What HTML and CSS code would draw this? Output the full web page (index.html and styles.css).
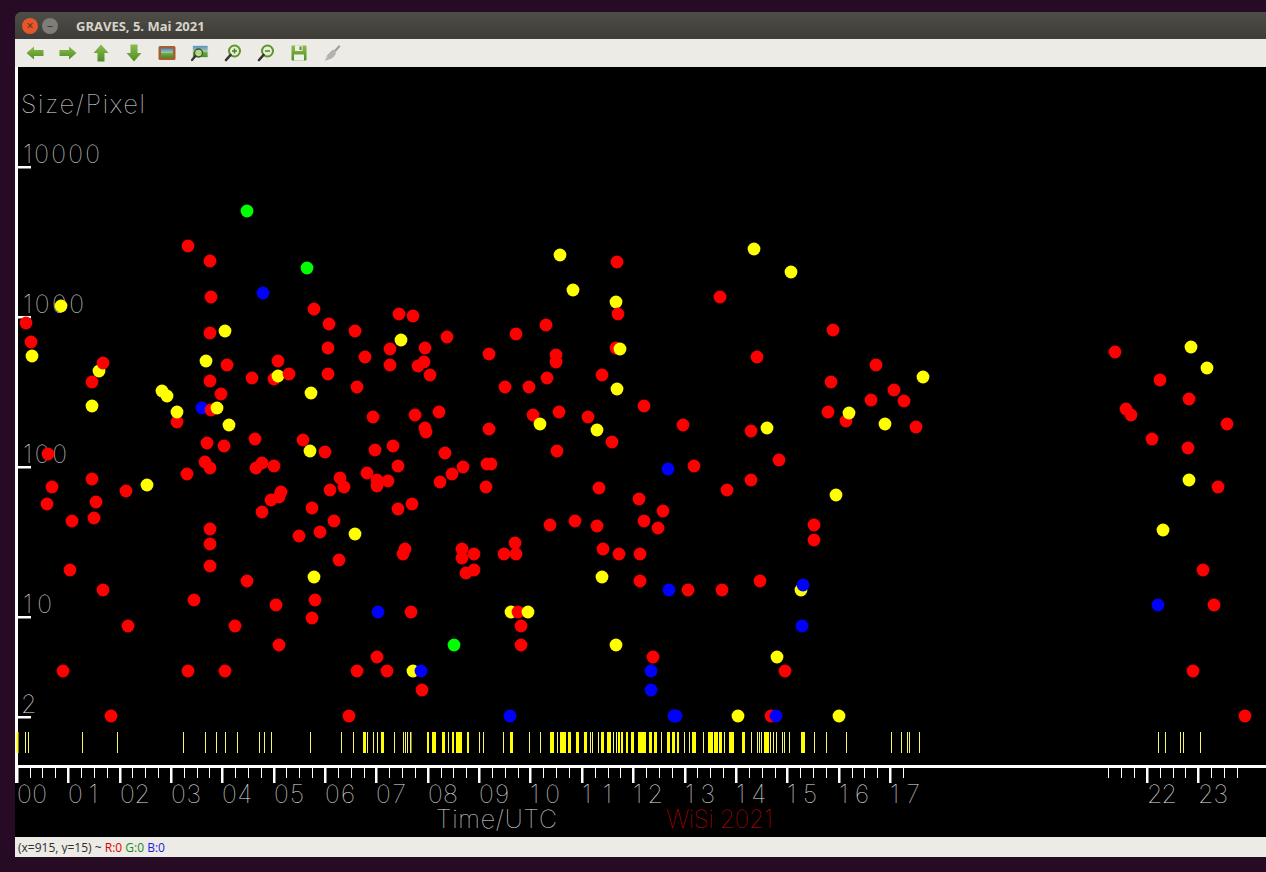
FILE: index.html
```html
<!DOCTYPE html>
<html lang="en">
<head>
  <meta charset="UTF-8">
  <title>GRAVES, 5. Mai 2021</title>
  <link rel="stylesheet" href="styles.css">
</head>
<body>
  <div class="window">
    <!-- TITLE BAR -->
    <div class="titlebar">
      <span class="winbtn close">&#215;</span>
      <span class="winbtn minimize">&#8211;</span>
      <span class="title">GRAVES, 5. Mai 2021</span>
    </div>

    <!-- TOOLBAR -->
    <div class="toolbar">
      <svg width="0" height="0" class="defs">
        <defs>
          <linearGradient id="green" x1="0" y1="0" x2="0" y2="1">
            <stop offset="0" stop-color="#8dbb50"/>
            <stop offset="1" stop-color="#4f8f22"/>
          </linearGradient>
          <linearGradient id="land" x1="0" y1="0" x2="0" y2="1">
            <stop offset="0" stop-color="#4f8fc9"/>
            <stop offset="0.5" stop-color="#a5c8a0"/>
            <stop offset="0.55" stop-color="#6fae3c"/>
            <stop offset="1" stop-color="#4d8a2a"/>
          </linearGradient>
        </defs>
      </svg>
      <span class="tool"><svg viewBox="0 0 18 18"><path d="M0.5 9 8 2.5V6h9.5v6H8v3.5z" fill="url(#green)"/></svg></span>
      <span class="tool"><svg viewBox="0 0 18 18"><path d="M17.5 9 10 2.5V6H0.5v6H10v3.5z" fill="url(#green)"/></svg></span>
      <span class="tool"><svg viewBox="0 0 18 18"><path d="M9 0.5 1.5 9H5.5v8.5h7V9h4z" fill="url(#green)"/></svg></span>
      <span class="tool"><svg viewBox="0 0 18 18"><path d="M9 17.5 1.5 9H5.5V0.5h7V9h4z" fill="url(#green)"/></svg></span>
      <span class="tool"><svg viewBox="0 0 18 18"><rect x="0.5" y="2" width="17" height="14" rx="1.5" fill="#a35f32"/><rect x="3" y="4.5" width="12" height="9" fill="url(#land)"/></svg></span>
      <span class="tool"><svg viewBox="0 0 18 18"><rect x="1.5" y="1.5" width="15.5" height="12" fill="url(#land)" stroke="#dfe6ea" stroke-width="0.8"/><circle cx="7.5" cy="9" r="4" fill="#b5d68a" stroke="#3c5a2a" stroke-width="1.4"/><path d="M4.5 12 1 16" stroke="#333" stroke-width="2.2" stroke-linecap="round"/></svg></span>
      <span class="tool"><svg viewBox="0 0 18 18"><circle cx="10.5" cy="7" r="5.5" fill="#e6efd2" stroke="#5f9430" stroke-width="2"/><path d="M8 7h5M10.5 4.5v5" stroke="#4f7f28" stroke-width="1.5"/><path d="M6.5 11 2 16" stroke="#333" stroke-width="2.6" stroke-linecap="round"/></svg></span>
      <span class="tool"><svg viewBox="0 0 18 18"><circle cx="10.5" cy="7" r="5.5" fill="#e6efd2" stroke="#5f9430" stroke-width="2"/><path d="M8 7h5" stroke="#4f7f28" stroke-width="1.5"/><path d="M6.5 11 2 16" stroke="#333" stroke-width="2.6" stroke-linecap="round"/></svg></span>
      <span class="tool"><svg viewBox="0 0 18 18"><path d="M1.5 2.5A1 1 0 0 1 2.5 1.5h13a1 1 0 0 1 1 1v13a1 1 0 0 1-1 1h-13a1 1 0 0 1-1-1z" fill="url(#green)"/><rect x="5" y="1.5" width="7.5" height="5.5" fill="#eef2e2"/><rect x="9.5" y="2.5" width="2" height="3.5" fill="#4f8f22"/><rect x="4" y="10.5" width="10" height="6" fill="#eef2e2"/></svg></span>
      <span class="tool"><svg viewBox="0 0 18 18"><path d="M11 6.5 16 1l1.5 1.5L12.5 8z" fill="#9c9c98"/><path d="M10.5 5.5 13 9c-1 3.5-5 7-11.5 7.5L5 12l-2.5 1.5C5 10 7.5 7.5 10.5 5.5z" fill="#b2b2ae"/></svg></span>
    </div>

    <!-- PLOT (coordinates are page pixels) -->
    <svg id="plot" class="plot" viewBox="15 67 1251 770">
      <g id="labels"></g>
      <text class="label axis-name" x="21" y="113" textLength="124">Size/Pixel</text>
      <text class="label" x="23" y="163" textLength="77">10000</text>
      <text class="label" x="23" y="313" textLength="61">1000</text>
      <text class="label" x="23" y="463" textLength="44">100</text>
      <text class="label" x="23" y="613" textLength="29">10</text>
      <text class="label" x="21" y="713">2</text>
      <text class="label" x="436" y="828" textLength="121">Time/UTC</text>
      <text class="label credit" x="666" y="828" textLength="107">WiSi 2021</text>
      <g id="axes"></g>
      <g id="bars"></g>
      <g id="dots"></g>
    </svg>

    <!-- STATUS BAR -->
    <div class="statusbar">
      <div class="status-text">(x=915, y=15) ~ <span class="r">R:0</span> <span class="g">G:0</span> <span class="b">B:0</span></div>
    </div>
  </div>
  <script src="plot.js"></script>
</body>
</html>
```

FILE: styles.css
```css
/* Stylesheet */
html, body {
  height: 100%;
  overflow: hidden;
}

body {
  margin: 0;
  padding: 12px 0 15px 15px;
  box-sizing: border-box;
  background-color: #270b24;
  font-family: "Open Sans", sans-serif;
}

.window {
  display: flex;
  flex-direction: column;
  height: 100%;
}

.titlebar {
  display: flex;
  align-items: center;
  height: 27px;
  flex: none;
  padding-left: 7px;
  box-sizing: border-box;
  background: linear-gradient(#4e4d48, #3d3c37);
  border-radius: 6px 0 0 0;
}

.winbtn {
  width: 16px;
  height: 16px;
  border-radius: 50%;
  margin-right: 4px;
  text-align: center;
  font-size: 12px;
  line-height: 15px;
  color: #4a2a18;
}

.winbtn.close {
  background-color: #e5562a;
}

.winbtn.minimize {
  background-color: #7e7d78;
  color: #3d3c37;
}

.title {
  margin-left: 14px;
  font-size: 13px;
  font-weight: 700;
  color: #d8d4ca;
}

.toolbar {
  display: flex;
  align-items: center;
  height: 28px;
  flex: none;
  padding-left: 3.5px;
  background-color: #edebe6;
}

.defs {
  position: absolute;
}

.tool {
  display: flex;
  justify-content: center;
  width: 33px;
}

.tool svg {
  width: 18px;
  height: 18px;
}

.plot {
  display: block;
  flex: none;
  width: 1251px;
  height: 770px;
  background-color: #000;
}

.label {
  font-family: Inter, sans-serif;
  font-size: 25px;
  font-weight: 100;
  fill: #e8e8e8;
}

.label.credit {
  fill: #d00000;
}

.statusbar {
  flex: none;
  height: 20px;
  padding: 2px 0 0 3px;
  box-sizing: border-box;
  background-color: #edebe6;
  font-size: 12px;
  line-height: 17px;
  color: #2e2e2e;
}

.status-text {
  height: 15px;
  overflow: hidden;
}

.r { color: #e00000; }
.g { color: #1a8a1a; }
.b { color: #1a1ae0; }
```

FILE: plot.js
```js
// Meteor echoes: x, y in page pixels, drawn in time order
const SVG_NS = "http://www.w3.org/2000/svg";

const COLORS = { r: "#ff0000", y: "#ffff00", g: "#00ff00", b: "#0000ff" };

const DOTS = {
  r: [[26,323],[31,342],[48,454],[52,487],[47,504],[72,521],[70,570],[103,590],[92,382],[103,363],[92,479],[96,502],[94,518],[126,491],[128,626],[63,671],[111,716],
    [188,246],[210,261],[211,297],[210,333],[227,365],[210,381],[221,394],[211,410],[177,422],[207,443],[224,446],[205,462],[210,468],[187,474],[210,529],[210,544],[210,566],[194,600],[235,626],[188,671],[225,671],
    [252,378],[278,361],[274,379],[289,374],[255,439],[262,463],[256,468],[274,466],[281,492],[279,497],[271,500],[262,512],[247,581],[276,605],[279,645],
    [314,309],[329,324],[328,348],[328,374],[303,440],[325,452],[355,331],[365,357],[357,387],[373,417],[375,450],[393,446],[398,466],[367,473],[377,480],[377,486],[388,481],[398,509],[412,504],[405,549],[403,554],[339,560],[320,532],[299,536],[334,521],[312,508],[330,490],[340,478],[344,487],[315,600],[312,618],[349,716],[357,671],[377,657],[387,671],[411,612],[422,690],
    [399,314],[413,316],[390,349],[390,365],[425,348],[418,366],[424,362],[430,375],[415,415],[425,428],[426,432],[447,337],[439,412],[445,453],[463,467],[452,474],[440,482],[462,549],[462,558],[474,554],[466,573],[474,570],
    [489,354],[505,387],[516,334],[529,387],[546,325],[556,355],[556,362],[547,378],[533,415],[559,412],[489,429],[487,464],[491,464],[486,487],[557,451],[550,525],[575,521],[504,554],[515,543],[516,554],[518,612],[521,626],[521,645],
    [617,262],[618,314],[616,348],[602,375],[588,417],[612,442],[599,488],[597,526],[603,549],[619,554],[640,554],[640,581],[644,521],[639,499],[658,528],[663,511],[644,406],[683,425],[694,466],[688,590],[722,590],[727,490],[720,297],[757,357],[751,431],[751,480],[779,460],[760,581],[653,657],[785,671],[771,716],
    [833,330],[831,382],[828,412],[846,421],[814,525],[814,540],[871,400],[876,365],[894,390],[904,401],[916,427],
    [1115,352],[1126,409],[1131,415],[1152,439],[1160,380],[1189,399],[1188,448],[1227,424],[1218,487],[1203,570],[1214,605],[1193,671],[1245,716]],
  y: [[61,306],[32,356],[99,371],[92,406],[147,485],[162,391],[167,396],[177,412],[225,331],[206,361],[217,408],[229,425],[278,376],[311,393],[310,451],[314,577],[355,534],[401,340],[413,671],[511,612],[528,612],[540,424],[560,255],[573,290],[616,302],[620,349],[617,389],[597,430],[602,577],[616,645],[754,249],[791,272],[767,428],[849,413],[885,424],[923,377],[836,495],[801,590],[777,657],[738,716],[839,716],[1191,347],[1207,368],[1189,480],[1163,530]],
  g: [[247,211],[307,268],[454,645]],
  b: [[263,293],[202,408],[668,469],[669,590],[378,612],[421,671],[651,671],[651,690],[510,716],[674,716],[676,716],[776,716],[803,585],[802,626],[1158,605]]
};

// Bottom strip: [x, width]
const BARS = [[16.5,2],[25,1],[28,1],[82,1],[117,1],[183,1],[205,1],[216,1],[225,1],[237,1],[259,1],[264,1],[271,1],[310,1],
  [341,1],[353,1],[363,3],[367,1],[373,1],[377,1],[381,3],[394,1],[403,1],[405,1],[407,1],[410,1.5],[427,2],[432,4],[442,3],[448,1],[452,2],[456,6],[467,2],[479,1],[483,1],[503,1],
  [510,3],[529,1],[540,1],[550,4],[557,1],[560,6],[568,3],[576,3],[584,3],[590,1],[592,1],[598,1],[601,3],[607,4],[613,1],[616,1],[618,2],[621,2],[626,2],[631,3],[638,8],[649,3],[654,3],[661,1],[667,3],[672,3],[677,2],
  [684,1],[689,1],[692,4],[703,1],[708,5],[714,4],[719,1],[720,2],[724,1],[729,5],[742,3],[751,1],[757,1],[759,1],[761,1],[764,5],[770,1],[773,1],[776,1],[782,1],[784,1],[789,1],[801,4],[814,1],[826,1],[846,1],
  [891,1],[901,1],[907,1],[909,1],[919,1],[1158,1],[1165,1],[1180,1],[1183,1],[1200,1]];

const HOUR_X0 = 16.8;
const HOUR_W = 51.37;

function add(parentId, tag, attrs, text) {
  const el = document.createElementNS(SVG_NS, tag);
  for (const key in attrs) el.setAttribute(key, attrs[key]);
  if (text) el.textContent = text;
  document.getElementById(parentId).appendChild(el);
}

function rect(x, y, w, h, fill) {
  add("axes", "rect", { x: x, y: y, width: w, height: h, fill: fill || "#fff" });
}

// Axes
rect(15, 67, 3, 716);
rect(15, 765, 1251, 3);
[167, 317, 467, 617, 717].forEach(y => rect(16, y - 1, 15, 2.5));

// Hour ticks and labels
for (let q = 0; q < 96; q++) {
  if (q > 69 && q < 85) continue;
  const x = HOUR_X0 + HOUR_W * q / 4;
  if (q % 4 === 0) {
    rect(Math.round(x) - 1, 768, 2.5, 15);
    const hour = q / 4;
    add("labels", "text", { class: "label", x: Math.round(x), y: 803, textLength: 30 }, String(hour).padStart(2, "0"));
  } else {
    rect(Math.round(x), 768, 1, 10);
  }
}

// Strip of event times
BARS.forEach(b => add("bars", "rect", {
  x: b[0], y: 732, width: b[1], height: 21, fill: b[1] < 2 ? "#f6f66a" : COLORS.y
}));

// Dots sorted by time, so later ones lie on top
const all = [];
for (const c in DOTS) DOTS[c].forEach(p => all.push({ x: p[0], y: p[1], c: c }));
all.sort((a, b) => a.x - b.x);
all.forEach(d => add("dots", "circle", { cx: d.x, cy: d.y, r: 6.4, fill: COLORS[d.c] }));
```
